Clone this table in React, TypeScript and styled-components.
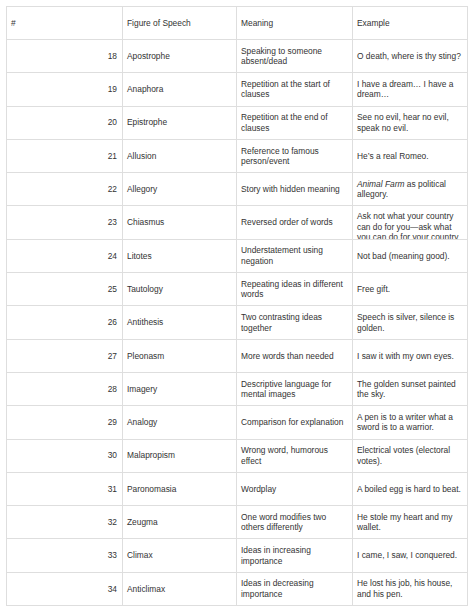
import React from "react";
import styled, { createGlobalStyle } from "styled-components";

const Global = createGlobalStyle`
  html, body { margin: 0; padding: 0; background: #ffffff; }
  body { font-family: "Liberation Sans", Arial, sans-serif; color: #333333; }
`;

const Page = styled.div`
  padding: 6px 0 0 6px;
`;

const Table = styled.div`
  display: grid;
  grid-template-columns: 116px 114px 116px 115px;
  grid-template-rows: 33px;
  grid-auto-rows: 33.3px;
  width: max-content;
  border-top: 1px solid #dedede;
  border-left: 1px solid #dedede;
`;

const Cell = styled.div<{ $num?: boolean }>`
  box-sizing: border-box;
  display: flex;
  align-items: safe center;
  justify-content: ${(p) => (p.$num ? "flex-end" : "flex-start")};
  padding: 5px ${(p) => (p.$num ? "5px" : "3px")} 5px 4px;
  border-right: 1px solid #dedede;
  border-bottom: 1px solid #dedede;
  overflow: hidden;
  font-size: 8.4px;
  line-height: 10.5px;
  color: #333333;
`;

const Text = styled.span`
  display: block;
`;

type Row = [number, string, string, React.ReactNode];

const rows: Row[] = [
  [18, "Apostrophe", "Speaking to someone absent/dead", "O death, where is thy sting?"],
  [19, "Anaphora", "Repetition at the start of clauses", "I have a dream… I have a dream…"],
  [20, "Epistrophe", "Repetition at the end of clauses", "See no evil, hear no evil, speak no evil."],
  [21, "Allusion", "Reference to famous person/event", "He’s a real Romeo."],
  [22, "Allegory", "Story with hidden meaning", <><em>Animal Farm</em> as political allegory.</>],
  [23, "Chiasmus", "Reversed order of words", "Ask not what your country can do for you—ask what you can do for your country."],
  [24, "Litotes", "Understatement using negation", "Not bad (meaning good)."],
  [25, "Tautology", "Repeating ideas in different words", "Free gift."],
  [26, "Antithesis", "Two contrasting ideas together", "Speech is silver, silence is golden."],
  [27, "Pleonasm", "More words than needed", "I saw it with my own eyes."],
  [28, "Imagery", "Descriptive language for mental images", "The golden sunset painted the sky."],
  [29, "Analogy", "Comparison for explanation", "A pen is to a writer what a sword is to a warrior."],
  [30, "Malapropism", "Wrong word, humorous effect", "Electrical votes (electoral votes)."],
  [31, "Paronomasia", "Wordplay", "A boiled egg is hard to beat."],
  [32, "Zeugma", "One word modifies two others differently", "He stole my heart and my wallet."],
  [33, "Climax", "Ideas in increasing importance", "I came, I saw, I conquered."],
  [34, "Anticlimax", "Ideas in decreasing importance", "He lost his job, his house, and his pen."],
];

export default function App() {
  return (
    <Page>
      <Global />
      <Table>
        <Cell><Text>#</Text></Cell>
        <Cell><Text>Figure of Speech</Text></Cell>
        <Cell><Text>Meaning</Text></Cell>
        <Cell><Text>Example</Text></Cell>
        {rows.map(([n, fig, meaning, ex]) => (
          <React.Fragment key={n}>
            <Cell $num><Text>{n}</Text></Cell>
            <Cell><Text>{fig}</Text></Cell>
            <Cell><Text>{meaning}</Text></Cell>
            <Cell><Text>{ex}</Text></Cell>
          </React.Fragment>
        ))}
      </Table>
    </Page>
  );
}
